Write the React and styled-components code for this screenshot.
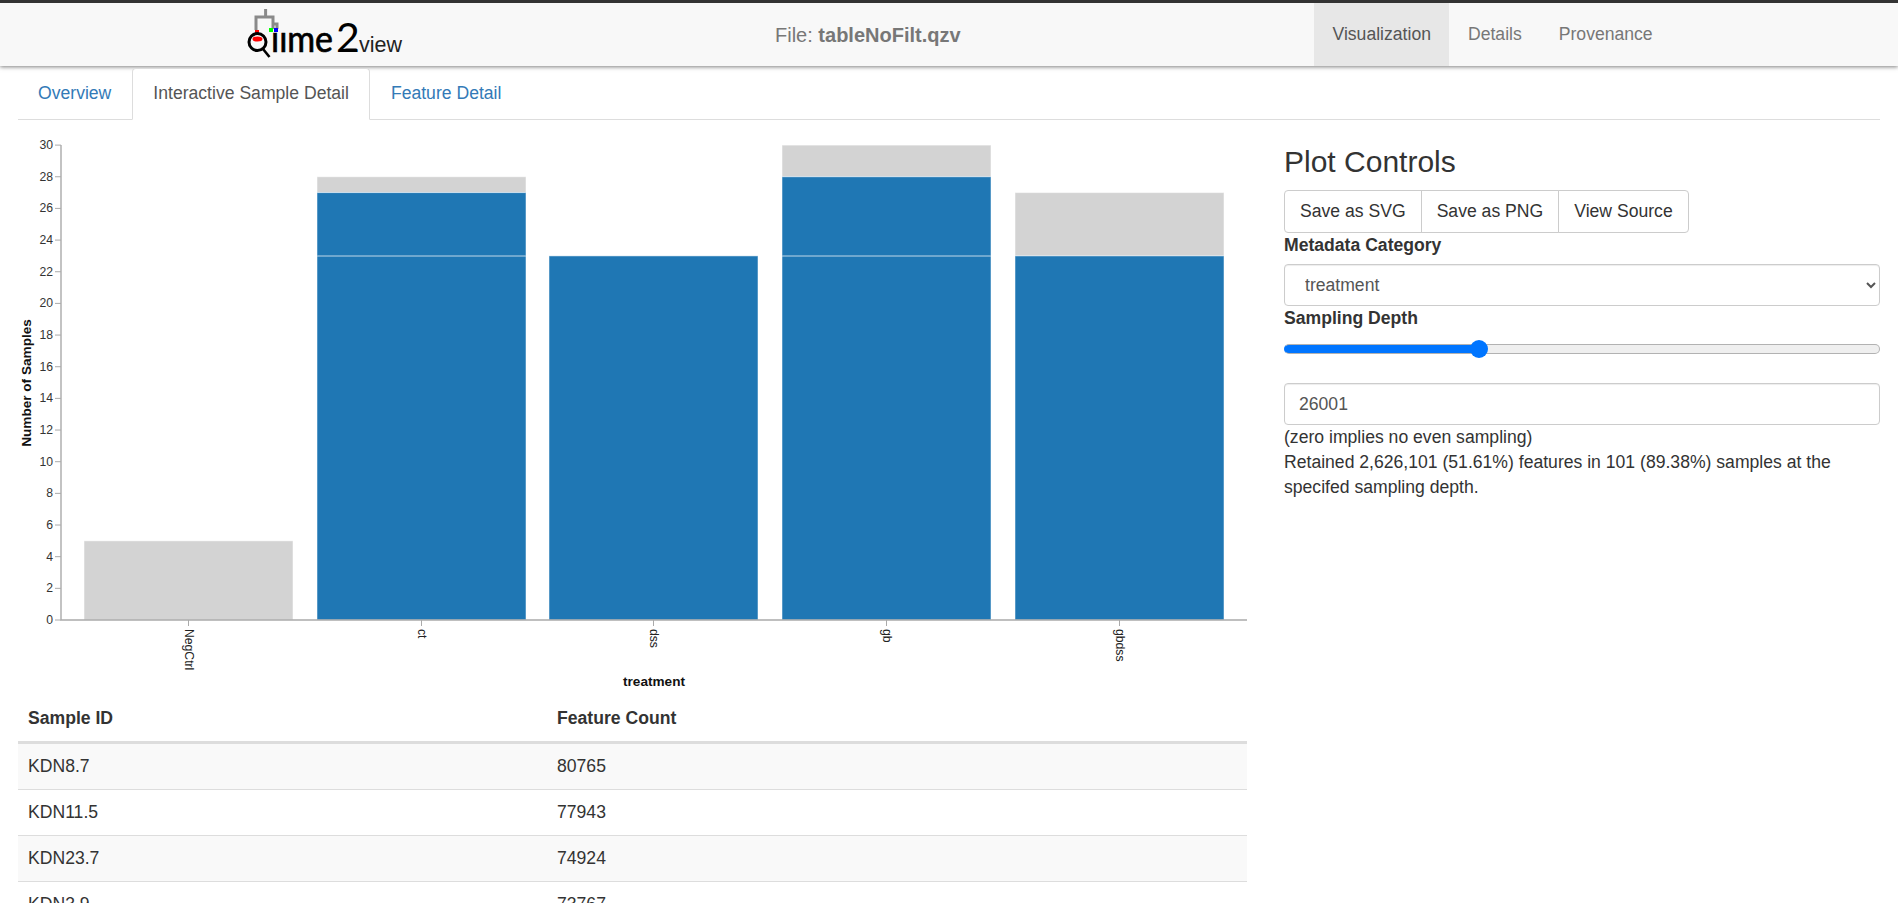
import React from 'react';
import styled, { createGlobalStyle } from 'styled-components';

const GlobalStyle = createGlobalStyle`
  html, body {
    margin: 0;
    height: 100%;
    overflow: hidden;
    background: #fff;
  }
  body {
    font-family: "Liberation Sans", Arial, sans-serif;
    font-size: 17.6px;
    line-height: 1.5;
    color: #333;
  }
`;

const Navbar = styled.header`
  display: grid;
  grid-template-columns: 633px 1fr 584px;
  align-items: stretch;
  height: 63px;
  background: #f8f8f8;
  border-top: 3px solid #333;
  box-shadow: 0 1px 4px rgba(0, 0, 0, 0.5);
`;

const LogoWrap = styled.div`
  display: flex;
  align-items: flex-start;
  padding: 5px 0 0 246px;
`;

const FileName = styled.div`
  display: flex;
  align-items: center;
  padding-left: 142px;
  font-size: 20px;
  color: #777;
  white-space: pre;

  b {
    font-weight: 700;
  }
`;

const NavLinks = styled.nav`
  display: flex;
  align-items: stretch;
`;

const NavItem = styled.a`
  display: flex;
  align-items: center;
  padding: 0 18.5px;
  color: ${(props) => (props.$active ? '#555' : '#777')};
  background: ${(props) => (props.$active ? '#e7e7e7' : 'transparent')};
`;

const Content = styled.main`
  padding: 0 18px;
`;

const Tabs = styled.ul`
  display: flex;
  margin: 0;
  padding: 2px 0 0;
  list-style: none;
  border-bottom: 1px solid #ddd;
  height: 51px;
  box-sizing: content-box;
`;

const Tab = styled.li`
  display: flex;
  align-items: center;
  box-sizing: border-box;
  height: 52px;
  padding: 0 20px 2px;
  color: ${(props) => (props.$active ? '#555' : '#337ab7')};
  background: ${(props) => (props.$active ? '#fff' : 'transparent')};
  border: 1px solid ${(props) => (props.$active ? '#ddd' : 'transparent')};
  border-bottom-color: ${(props) => (props.$active ? '#fff' : 'transparent')};
  border-radius: 4px 4px 0 0;

  &:first-child {
    margin-left: -1px;
  }
`;

const Columns = styled.div`
  display: grid;
  grid-template-columns: 1229px 596px;
  column-gap: 37px;
`;

const LeftColumn = styled.section`
  min-width: 0;
`;

const ChartSvg = styled.svg`
  display: block;
  margin-left: -18px;
`;

const Table = styled.table`
  width: 100%;
  border-collapse: collapse;

  th {
    text-align: left;
    font-weight: 700;
    padding: 11px 10px;
    line-height: 24px;
    border-bottom: 3px solid #ddd;
  }

  td {
    padding: 11px 10px;
    line-height: 23px;
    border-bottom: 1px solid #ddd;
  }

  tbody tr:nth-child(odd) {
    background: #f9f9f9;
  }

  th:first-child,
  td:first-child {
    width: 509px;
  }
`;

const Controls = styled.aside`
  padding-top: 24px;
`;

const Heading = styled.h3`
  margin: 0 0 10px;
  font-size: 30px;
  font-weight: 400;
  line-height: 36px;
`;

const ButtonGroup = styled.div`
  display: flex;
`;

const GroupButton = styled.button`
  height: 43px;
  padding: 0 15px;
  font: 17.6px "Liberation Sans", Arial, sans-serif;
  color: #333;
  background: #fff;
  border: 1px solid #ccc;
  margin-left: -1px;

  &:first-child {
    margin-left: 0;
    border-radius: 4px 0 0 4px;
  }

  &:last-child {
    border-radius: 0 4px 4px 0;
  }
`;

const FieldLabel = styled.label`
  display: block;
  font-weight: 700;
  line-height: 24px;
`;

const Select = styled.select`
  display: block;
  box-sizing: border-box;
  width: 100%;
  height: 42px;
  margin-top: 7px;
  padding: 0 12px 0 16px;
  font: 17.6px "Liberation Sans", Arial, sans-serif;
  color: #555;
  background: #fff;
  border: 1px solid #ccc;
  border-radius: 4px;
  box-shadow: inset 0 1px 1px rgba(0, 0, 0, 0.075);
`;

const Range = styled.input`
  display: block;
  width: 100%;
  height: 18px;
  margin: 10px 0 25px;
  appearance: none;
  background: transparent;

  &::-webkit-slider-runnable-track {
    height: 10px;
    box-sizing: border-box;
    border-radius: 5px;
    background: linear-gradient(to right, #0075ff 32.5%, #efefef 32.5%);
    border: 1px solid #b2b2b2;
    border-left-color: #0075ff;
  }

  &::-webkit-slider-thumb {
    appearance: none;
    width: 18px;
    height: 18px;
    margin-top: -5px;
    border-radius: 50%;
    background: #0075ff;
  }
`;

const TextInput = styled.input`
  display: block;
  box-sizing: border-box;
  width: 100%;
  height: 42px;
  padding: 0 14px;
  font: 17.6px "Liberation Sans", Arial, sans-serif;
  color: #555;
  background: #fff;
  border: 1px solid #ccc;
  border-radius: 4px;
  box-shadow: inset 0 1px 1px rgba(0, 0, 0, 0.075);
`;

const Note = styled.p`
  margin: 0;
  line-height: 25px;
`;

function Logo() {
  return (
    <svg width="160" height="54" viewBox="0 0 160 54">
      <path d="M19.6 1V9M10 22V9H27V16H31V21M27 16V21" fill="none" stroke="#8a8a8a" strokeWidth="3" />
      <rect x="9" y="22" width="4" height="3.5" fill="#f00" />
      <rect x="23" y="20" width="4" height="4" fill="#0f0" />
      <rect x="28" y="20" width="4" height="4" fill="#00f" />
      <circle cx="11.5" cy="34" r="8.5" fill="none" stroke="#000" strokeWidth="3" />
      <ellipse cx="11.5" cy="31" rx="5" ry="2.5" fill="#f00" />
      <path d="M17 41L23.5 49" stroke="#000" strokeWidth="2.6" />
      <text
        x="25"
        y="44"
        fontFamily="Lato, sans-serif"
        fontSize="36"
        textLength="62"
        lengthAdjust="spacingAndGlyphs"
        fill="#000"
        stroke="#000"
        strokeWidth="0.7"
      >
        ııme
      </text>
      <text x="90" y="44" fontFamily="Lato, sans-serif" fontSize="41" fill="#000">2</text>
      <text x="113" y="44" fontFamily="Liberation Sans, sans-serif" fontSize="21.5" fill="#222">view</text>
    </svg>
  );
}

const axisX = 61;
const axisBottom = 620;
const unit = 15.83;
const yFor = (v) => axisBottom - v * unit;

const bars = [
  { name: 'NegCtrl', x: 84, blue: [], grey: [0, 5] },
  { name: 'ct', x: 317, blue: [[0, 23], [23, 27]], grey: [27, 28] },
  { name: 'dss', x: 549, blue: [[0, 23]], grey: null },
  { name: 'gb', x: 782, blue: [[0, 23], [23, 28]], grey: [28, 30] },
  { name: 'gbdss', x: 1015, blue: [[0, 23]], grey: [23, 27] },
];
const barWidth = 209;
const ticks = Array.from({ length: 16 }, (_, i) => i * 2);

function Segment({ x, from, to, color }) {
  return (
    <rect
      x={x}
      y={yFor(to)}
      width={barWidth}
      height={(to - from) * unit}
      fill={color}
      stroke="#fff"
      strokeOpacity="0.5"
      strokeWidth="1"
    />
  );
}

function BarChart() {
  return (
    <ChartSvg width="1265" height="575" viewBox="0 120 1265 575">
      {bars.map((b) => (
        <g key={b.name}>
          {b.grey && <Segment x={b.x} from={b.grey[0]} to={b.grey[1]} color="#d3d3d3" />}
          {b.blue.map((s) => (
            <Segment key={s[0]} x={b.x} from={s[0]} to={s[1]} color="#1f77b4" />
          ))}
        </g>
      ))}
      <g stroke="#aaa" fill="none">
        <path d={`M${axisX} 145V${axisBottom}H1247`} strokeWidth="1.4" />
        {ticks.map((t) => (
          <path key={t} d={`M${axisX - 6} ${yFor(t)}H${axisX}`} />
        ))}
        {bars.map((b) => (
          <path key={b.name} d={`M${b.x + barWidth / 2} ${axisBottom}v6`} />
        ))}
      </g>
      <g fontFamily="Liberation Sans, sans-serif" fontSize="12.2" fill="#333" textAnchor="end">
        {ticks.map((t) => (
          <text key={t} x={axisX - 8} y={yFor(t) + 4}>{t}</text>
        ))}
      </g>
      <g fontFamily="Liberation Sans, sans-serif" fontSize="12.2" fill="#222">
        {bars.map((b) => (
          <text
            key={b.name}
            transform={`translate(${b.x + barWidth / 2 - 4} 629) rotate(90)`}
          >
            {b.name}
          </text>
        ))}
      </g>
      <text
        x="654"
        y="686"
        fontFamily="Liberation Sans, sans-serif"
        fontSize="13.6"
        fontWeight="700"
        fill="#111"
        textAnchor="middle"
      >
        treatment
      </text>
      <text
        transform="translate(31 383) rotate(-90)"
        fontFamily="Liberation Sans, sans-serif"
        fontSize="13.6"
        fontWeight="700"
        fill="#111"
        textAnchor="middle"
      >
        Number of Samples
      </text>
    </ChartSvg>
  );
}

const samples = [
  ['KDN8.7', '80765'],
  ['KDN11.5', '77943'],
  ['KDN23.7', '74924'],
  ['KDN3.9', '73767'],
];

export default function App() {
  return (
    <>
      <GlobalStyle />
      <Navbar>
        <LogoWrap>
          <Logo />
        </LogoWrap>
        <FileName>
          File: <b>tableNoFilt.qzv</b>
        </FileName>
        <NavLinks>
          <NavItem $active>Visualization</NavItem>
          <NavItem>Details</NavItem>
          <NavItem>Provenance</NavItem>
        </NavLinks>
      </Navbar>
      <Content>
        <Tabs>
          <Tab>Overview</Tab>
          <Tab $active>Interactive Sample Detail</Tab>
          <Tab>Feature Detail</Tab>
        </Tabs>
        <Columns>
          <LeftColumn>
            <BarChart />
            <Table>
              <thead>
                <tr>
                  <th>Sample ID</th>
                  <th>Feature Count</th>
                </tr>
              </thead>
              <tbody>
                {samples.map(([id, count]) => (
                  <tr key={id}>
                    <td>{id}</td>
                    <td>{count}</td>
                  </tr>
                ))}
              </tbody>
            </Table>
          </LeftColumn>
          <Controls>
            <Heading>Plot Controls</Heading>
            <ButtonGroup>
              <GroupButton>Save as SVG</GroupButton>
              <GroupButton>Save as PNG</GroupButton>
              <GroupButton>View Source</GroupButton>
            </ButtonGroup>
            <FieldLabel>Metadata Category</FieldLabel>
            <Select defaultValue="treatment">
              <option value="treatment">treatment</option>
            </Select>
            <FieldLabel>Sampling Depth</FieldLabel>
            <Range type="range" min="0" max="80765" defaultValue="26001" />
            <TextInput type="text" defaultValue="26001" />
            <Note>(zero implies no even sampling)</Note>
            <Note>Retained 2,626,101 (51.61%) features in 101 (89.38%) samples at the specifed sampling depth.</Note>
          </Controls>
        </Columns>
      </Content>
    </>
  );
}
